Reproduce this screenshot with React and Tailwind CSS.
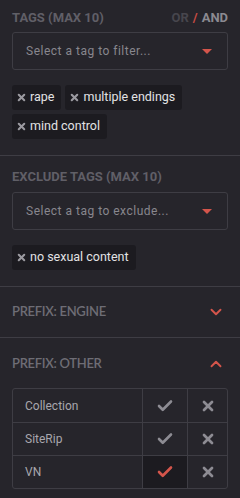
import { Check, X, ChevronDown, ChevronUp } from 'lucide-react'

const head = { fontFamily: 'Roboto, "Liberation Sans", sans-serif' }
const body = { fontFamily: 'Roboto, "Liberation Sans", sans-serif' }
const sub = { fontFamily: 'Lato, "Open Sans", sans-serif' }

function TagSelect({ placeholder }) {
  return (
    <div className="h-[38px] border border-[#3e3d44] rounded-[3px] flex items-center justify-between pl-[13px] pr-[15px]">
      <span className="text-[12px] tracking-[0.5px] text-[#88878e]" style={body}>{placeholder}</span>
      <span className="w-0 h-0 border-l-[5px] border-r-[5px] border-t-[5px] border-l-transparent border-r-transparent border-t-[#d4554b]" />
    </div>
  )
}

function Tag({ label }) {
  return (
    <div className="h-[25px] bg-[#1c1b20] rounded-[3px] flex items-center pl-[4px] pr-[7px] gap-[3px]">
      <X size={11} strokeWidth={4.5} className="text-[#9b9aa0]" />
      <span className="text-[12.5px] text-[#e2e2e4]" style={body}>{label}</span>
    </div>
  )
}

function Heading({ children }) {
  return <div className="text-[13px] leading-[15px] font-bold text-[#605f67]" style={head}>{children}</div>
}

const prefixes = [
  { name: 'Collection', on: false },
  { name: 'SiteRip', on: false },
  { name: 'VN', on: true },
]

export default function App() {
  return (
    <div className="w-[240px] h-[498px] bg-[#26252b] overflow-hidden">
      <div className="px-[12px] pt-[10px] pb-[16px] border-b border-[#3e3d44]">
        <div className="flex justify-between items-center mb-[7px]">
          <Heading>TAGS (MAX 10)</Heading>
          <div className="text-[13px] leading-[15px] font-bold flex gap-[4px]" style={head}>
            <span className="text-[#47464d]">OR</span>
            <span className="text-[#c54b43]">/</span>
            <span className="text-[#8b8a91]">AND</span>
          </div>
        </div>
        <TagSelect placeholder="Select a tag to filter..." />
        <div className="flex flex-wrap gap-[4px] mt-[15px]">
          <Tag label="rape" />
          <Tag label="multiple endings" />
          <Tag label="mind control" />
        </div>
      </div>

      <div className="px-[12px] pt-[13px] pb-[16px] border-b border-[#3e3d44]">
        <div className="mb-[8px]"><Heading>EXCLUDE TAGS (MAX 10)</Heading></div>
        <TagSelect placeholder="Select a tag to exclude..." />
        <div className="flex flex-wrap gap-[4px] mt-[15px]">
          <Tag label="no sexual content" />
        </div>
      </div>

      <div className="h-[51px] px-[12px] flex items-center justify-between border-b border-[#3e3d44]">
        <span className="text-[13px] font-semibold tracking-[-0.3px] text-[#6e6d75]" style={sub}>PREFIX: ENGINE</span>
        <ChevronDown size={18} strokeWidth={2.5} className="text-[#d4554b] mr-[3px]" />
      </div>

      <div className="px-[12px] pt-[18px]">
        <div className="flex items-center justify-between mb-[16px] h-[16px]">
          <span className="text-[13px] font-semibold tracking-[-0.3px] text-[#6e6d75]" style={sub}>PREFIX: OTHER</span>
          <ChevronUp size={18} strokeWidth={2.5} className="text-[#d4554b] mr-[3px]" />
        </div>
        <div className="border border-[#3e3d44] rounded-[3px] overflow-hidden">
          {prefixes.map((p, i) => (
            <div key={p.name} className={`flex h-[33px] ${i > 0 ? 'border-t border-[#3e3d44]' : ''}`}>
              <div className="w-[130px] border-r border-[#3e3d44] flex items-center pl-[12px] text-[12px] text-[#a8a7ad]" style={body}>{p.name}</div>
              <div className={`w-[45px] border-r border-[#3e3d44] flex items-center justify-center ${p.on ? 'bg-[#1c1b20]' : ''}`}>
                <Check size={18} strokeWidth={3.5} className={p.on ? 'text-[#d4554b]' : 'text-[#8d8c93]'} />
              </div>
              <div className="flex-1 flex items-center justify-center">
                <X size={16} strokeWidth={4} className="text-[#8d8c93]" />
              </div>
            </div>
          ))}
        </div>
      </div>
    </div>
  )
}
